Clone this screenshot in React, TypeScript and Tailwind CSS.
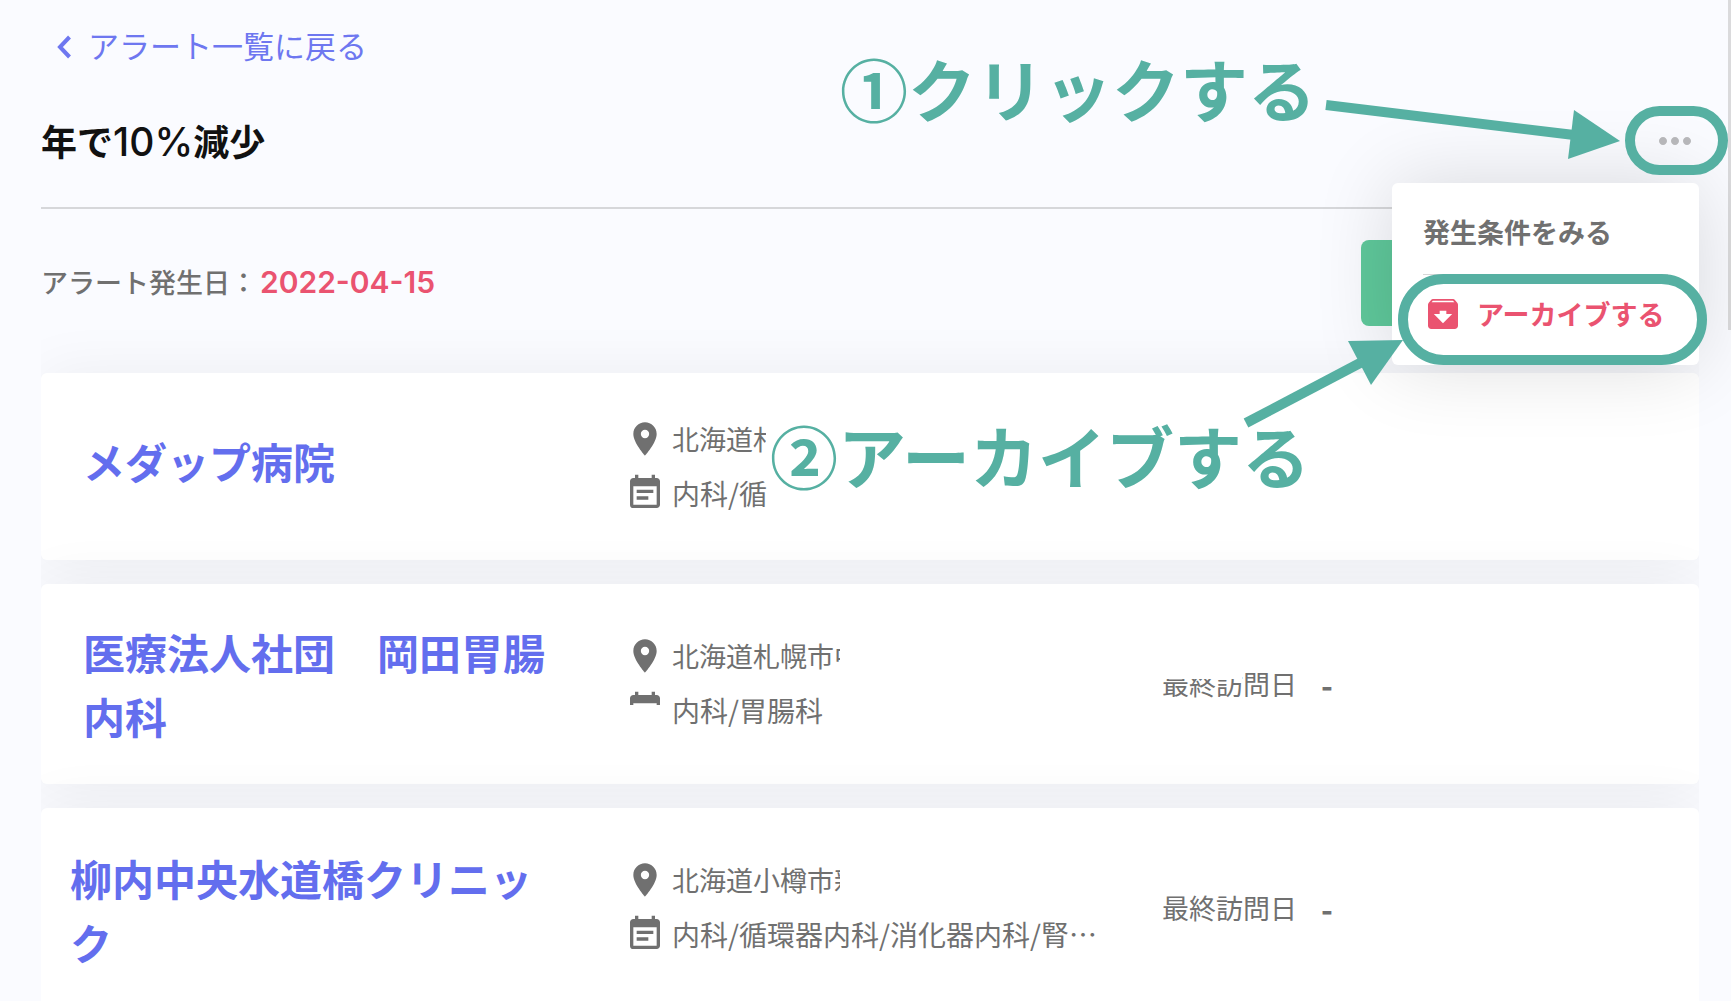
import { MdArchive, MdEventNote, MdLocationOn, MdMoreHoriz } from "react-icons/md";

type Facility = {
  name: string;
  address: string;
  departments: string;
  namePadding: string;
  cardHeight: string;
  addressWidth: string;
  clipCalendar?: boolean;
  showVisit?: boolean;
  clipVisit?: boolean;
};

const facilities: Facility[] = [
  {
    name: "メダップ病院",
    address: "北海道札",
    departments: "内科/循",
    namePadding: "pl-[42px] pb-3",
    cardHeight: "min-h-[187px]",
    addressWidth: "w-[94px]",
  },
  {
    name: "医療法人社団　岡田胃腸内科",
    address: "北海道札幌市中",
    departments: "内科/胃腸科",
    namePadding: "pl-[42px]",
    cardHeight: "min-h-[200px]",
    addressWidth: "w-[168px]",
    clipCalendar: true,
    showVisit: true,
    clipVisit: true,
  },
  {
    name: "柳内中央水道橋クリニック",
    address: "北海道小樽市新",
    departments: "内科/循環器内科/消化器内科/腎…",
    namePadding: "pl-[29px] pt-1",
    cardHeight: "min-h-[200px]",
    addressWidth: "w-[168px]",
    showVisit: true,
  },
];

function FacilityCard({ facility }: { facility: Facility }) {
  return (
    <li
      className={`grid grid-cols-[584fr_537fr_537fr] items-center rounded-md bg-white shadow-[0_0_60px_rgba(0,0,0,0.06)] ${facility.cardHeight}`}
    >
      <div className={facility.namePadding}>
        <a href="#" className="block max-w-[480px] text-[42px] leading-[64px] font-bold text-[#636eee]">
          {facility.name}
        </a>
      </div>

      <div className="pb-0.5 leading-[54px] whitespace-nowrap text-[#707070]">
        <div className="flex h-[54px] items-center gap-[7px] text-[27px]">
          <MdLocationOn className="size-10 shrink-0" />
          <span className={`overflow-hidden ${facility.addressWidth}`}>{facility.address}</span>
        </div>
        <div className="flex h-[54px] items-center gap-[7px] text-[28px]">
          <span className="h-10 shrink-0">
            <span className={`block overflow-hidden ${facility.clipCalendar ? "h-[15px]" : "h-10"}`}>
              <MdEventNote className="size-10" />
            </span>
          </span>
          <span>{facility.departments}</span>
        </div>
      </div>

      {facility.showVisit && (
        <dl className="flex items-center gap-6 text-[27px] leading-10 text-[#707070]">
          <dt
            className={
              facility.clipVisit
                ? "[clip-path:polygon(0_15px,80px_15px,80px_0,100%_0,100%_100%,0_100%)]"
                : ""
            }
          >
            最終訪問日
          </dt>
          <dd className="text-[32px] font-bold">-</dd>
        </dl>
      )}
    </li>
  );
}

function AlertMenu() {
  return (
    <div className="absolute top-[183px] right-8 z-10 h-[182px] w-[307px] rounded-md bg-white px-[31px] text-[27px] font-bold shadow-[0_0_80px_rgba(0,0,0,0.14)]">
      <button type="button" className="block h-[92px] w-full border-b border-[#d8d8d8] pt-2 text-left text-[#707070]">
        発生条件をみる
      </button>
      <button type="button" className="flex h-[78px] w-full items-center gap-[14px] whitespace-nowrap text-[#ea5370]">
        <MdArchive className="size-10 shrink-0" />
        アーカイブする
      </button>
    </div>
  );
}

// Numbered steps, rings and arrows drawn over the screen
function Guide() {
  return (
    <div className="pointer-events-none absolute top-0 right-0 z-20 h-[540px] w-[1000px] text-[68px] leading-[80px] font-bold whitespace-nowrap text-[#56b0a2]">
      <p className="absolute top-12 left-[109px]">①クリックする</p>
      <p className="absolute top-[415px] left-[39px]">②アーカイブする</p>
      <div className="absolute top-[106px] right-[3px] h-[69px] w-[103px] rounded-full border-10 border-current" />
      <div className="absolute top-[274px] right-6 h-[91px] w-[309px] rounded-full border-10 border-current" />
      <svg viewBox="731 0 1000 540" className="size-full" fill="currentColor" aria-hidden="true">
        <path d="M1326 105 1574 135" stroke="currentColor" strokeWidth="10" />
        <path d="M1620 141 1574 110 1568 159Z" />
        <path d="M1246 423 1362 362" stroke="currentColor" strokeWidth="10" />
        <path d="M1403 340 1348 341 1371 385Z" />
      </svg>
    </div>
  );
}

export default function App() {
  return (
    <div
      lang="ja"
      className="relative h-screen overflow-hidden bg-[#fafbff] font-['Noto_Sans_CJK_JP',sans-serif]"
    >
      <main className="pr-8 pl-[41px]">
        <a href="#" className="flex h-[91px] items-center gap-[3px] text-[31px] text-[#6e77f0]">
          <svg viewBox="0 0 44 44" className="size-11" fill="none" stroke="currentColor" strokeWidth="4" aria-hidden="true">
            <path d="M28.5 13 19 23l9.500 10" />
          </svg>
          アラート一覧に戻る
        </a>

        <header className="flex h-[118px] items-center justify-between border-b-2 border-[#d6d7da] pb-4">
          <h1 className="text-[36px] leading-[54px] font-bold text-[#111111]">
            年で<span className="font-['Inter'] text-[39px] font-medium">10%</span>減少
          </h1>
          <button type="button" aria-label="メニュー" className="text-[#b9b9bc]">
            <MdMoreHoriz className="size-12" />
          </button>
        </header>

        <div className="flex h-[148px] items-center justify-between">
          <p className="flex items-center gap-[3px] pb-0.5 text-[27px] font-medium text-[#707070]">
            アラート発生日：
            <time className="font-['Inter'] text-[30px] font-semibold text-[#ea5370]">2022-04-15</time>
          </p>
          <button type="button" aria-label="ダウンロード" className="h-[86px] w-[338px] rounded-lg bg-[#5fc89b]" />
        </div>

        <ul className="-mt-16 flex flex-col gap-6 overflow-hidden pt-20">
          {facilities.map((facility) => (
            <FacilityCard key={facility.name} facility={facility} />
          ))}
        </ul>
      </main>

      <AlertMenu />
      <Guide />
      <div className="absolute top-0 right-0 h-[330px] w-[3px] bg-[#dadadc]" />
    </div>
  );
}
